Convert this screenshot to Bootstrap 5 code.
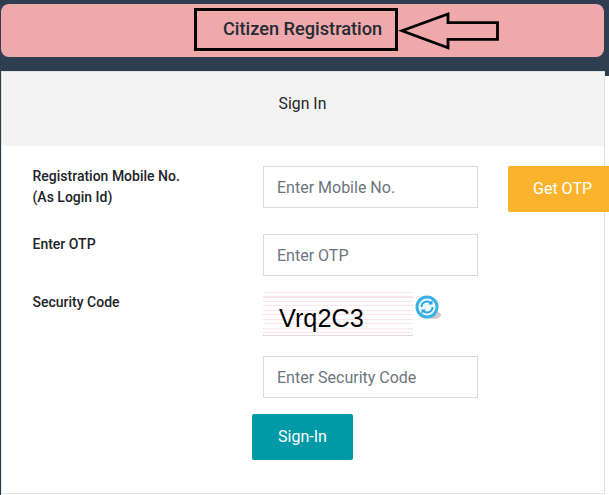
<!DOCTYPE html>
<html lang="en">
<head>
<meta charset="utf-8">
<title>Citizen Registration</title>
<link href="https://cdn.jsdelivr.net/npm/bootstrap@5.3.0/dist/css/bootstrap.min.css" rel="stylesheet">
<style>
html,body{height:495px;overflow:hidden}
body{font-family:Roboto,"Liberation Sans",sans-serif;color:#212529;
 background:linear-gradient(#2e3e50,#2e3e50) 0 0/100% 76px no-repeat,linear-gradient(#2e3e50,#2e3e50) 0 0/1px 100% no-repeat,#fff}
.top-strip{margin:4px 5px 14px 1px;height:53px;background:#f0a9ab;border-radius:8px}
.title-box{margin-left:193px;width:204px;height:43px;border:3px solid #000;font-size:18.2px;font-weight:500;color:#252b33;padding-left:26px;line-height:35px;white-space:nowrap}
.arrow-svg{margin-top:4px}
.login-card{margin-left:1px;width:604px;height:423px;border:1px solid #dfe1e3;border-radius:0;background:#fff;overflow:visible}
.login-head{height:74px;padding-bottom:10px;padding-right:2px;background:#f3f3f3;font-size:15.8px;color:#262626;border-radius:0;margin-left:1px}
.form-area{display:grid;grid-template-columns:230.5px 215px 110px;padding:20px 0 0 30.5px}
.form-lab{font-size:14px;font-weight:500;line-height:21px;color:#212529;margin:0}
.form-inp{height:42px;border:1px solid #dcdcdc;border-radius:0;font-size:16px;padding:0 13px;color:#495057}
.form-inp::placeholder{color:#6c757d;opacity:1}
.btn-otp{height:46px;width:110px;margin-left:30px;background:#fbb32e;border:0;border-radius:2px;color:#fff;font-size:16px;padding:0 0 0 25px;text-align:left}
.btn-go{height:46px;width:101px;background:#0099a8;border:0;border-radius:2px;color:#fff;font-size:16px;margin-left:-11px;margin-top:16px;padding:0}
.captcha-wrap{display:flex;align-items:flex-start}
.captcha-pic{width:150px;height:44px;background:repeating-linear-gradient(#fbe4eb 0 1px,#fff 1px 4.5px);font-family:"Liberation Sans",sans-serif;font-size:25.3px;color:#000;line-height:52px;padding-left:16px;border-bottom:1px dotted #ccc}
.gap1{grid-column:1/-1;height:22px}
.gap2{grid-column:1/-1;height:16px}
.gap3{grid-column:1/-1;height:20px}
</style>
</head>
<body>
<div class="top-strip d-flex align-items-start pt-1">
  <div class="title-box">Citizen Registration</div>
  <svg class="arrow-svg" width="102" height="38" viewBox="0 0 102 38">
    <polygon points="4,18.700 50,2 50,10.700 99.500,10.700 99.500,27.300 50,27.300 50,35.700" fill="none" stroke="#000" stroke-width="2.800"/>
  </svg>
</div>
<div class="card login-card">
  <div class="login-head d-flex align-items-center justify-content-center">Sign In</div>
  <div class="form-area">
    <p class="form-lab">Registration Mobile No.<br>(As Login Id)</p>
    <input class="form-control form-inp" placeholder="Enter Mobile No.">
    <button class="btn btn-otp" type="button">Get OTP</button>
    <div class="gap1"></div>
    <p class="form-lab">Enter OTP</p>
    <input class="form-control form-inp" placeholder="Enter OTP">
    <div></div>
    <div class="gap2"></div>
    <p class="form-lab">Security Code</p>
    <div class="captcha-wrap">
      <div class="captcha-pic">Vrq2C3</div>
      <svg width="32" height="32" viewBox="0 0 32 32">
        <ellipse cx="21" cy="23" rx="7" ry="4" fill="#aaa" opacity=".6"/>
        <circle cx="14" cy="15" r="11.500" fill="#3bb0e6"/>
        <circle cx="14" cy="15" r="8.500" fill="#eef9fd"/>
        <path d="M8.500 15a5.500 5.500 0 0 1 9.500-3.800M19.500 15a5.500 5.500 0 0 1-9.500 3.800" fill="none" stroke="#2ba6e0" stroke-width="2"/>
        <path d="M19.500 8v4.500H15zM8.500 22v-4.500H13z" fill="#2ba6e0"/>
      </svg>
    </div>
    <div></div>
    <div class="gap3"></div>
    <div></div>
    <input class="form-control form-inp" placeholder="Enter Security Code">
    <div></div>
    <div></div>
    <div><button class="btn btn-go" type="button">Sign-In</button></div>
  </div>
</div>
<script src="https://cdn.jsdelivr.net/npm/bootstrap@5.3.0/dist/js/bootstrap.bundle.min.js"></script>
</body>
</html>
